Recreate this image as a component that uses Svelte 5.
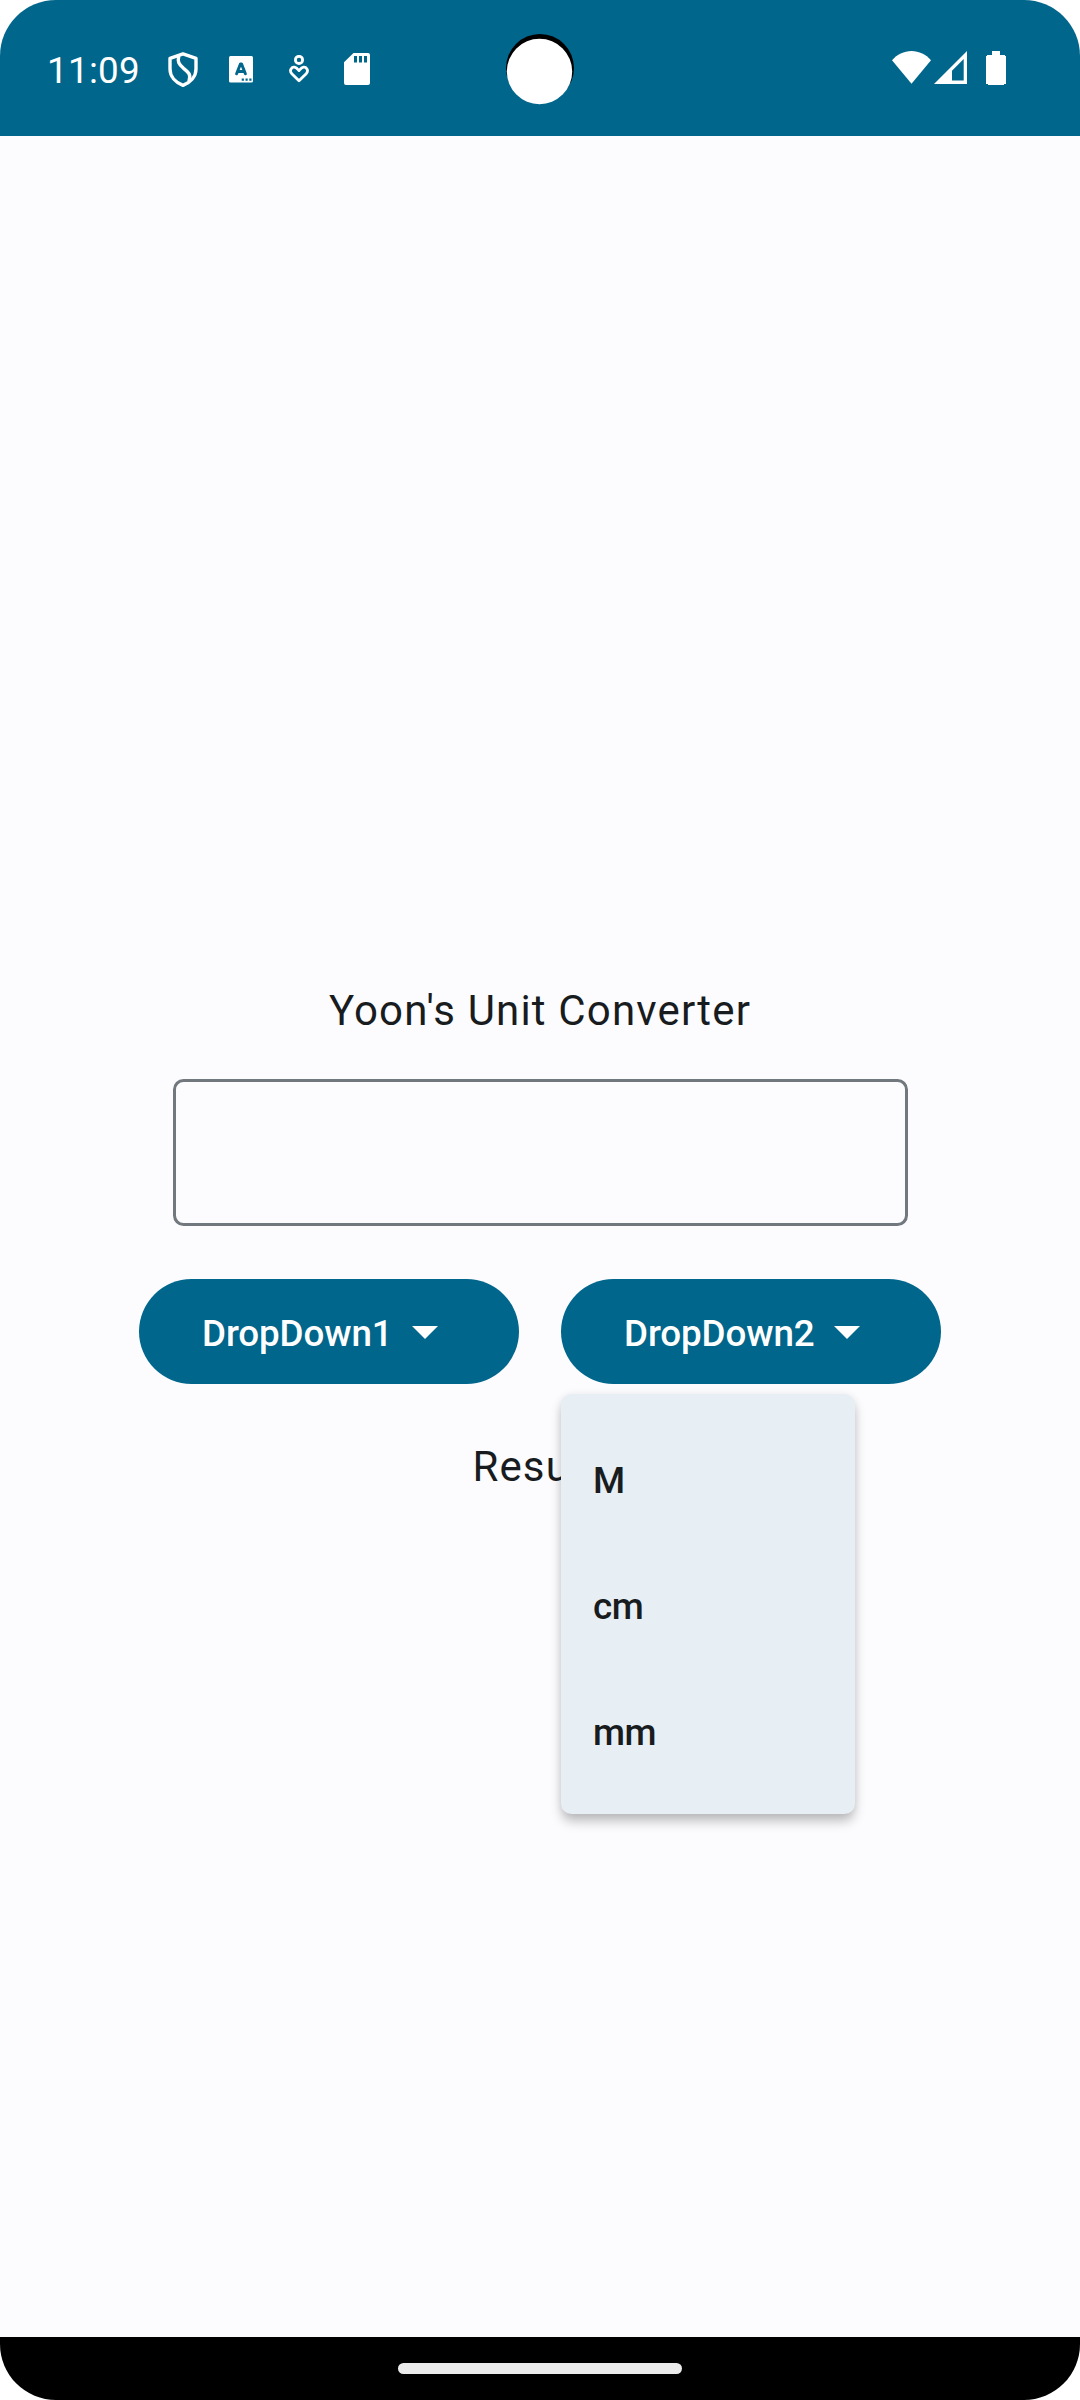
<script>
  const units = ['M', 'cm', 'mm'];
  const dropdowns = [
    { label: 'DropDown1', open: false },
    { label: 'DropDown2', open: true },
  ];
  let value = $state('');
</script>

<div class="screen">
  <header class="status">
    <span class="clock">11:09</span>
    <svg class="shield" width="30" height="36" viewBox="0 0 30 36">
      <g fill="none" stroke="#fff" stroke-width="3.4" stroke-linejoin="round">
        <path d="M15 1.900 L28 6.400 V17 C28 24.500 22.500 30.500 15 33.300 C7.500 30.500 2 24.500 2 17 V6.400 Z" />
        <path d="M10.800 4 C9.500 9.500 10.500 12 15.500 16.300 C20.500 20.300 23.500 22.500 20.900 29.500" />
      </g>
    </svg>
    <svg class="letter" width="24" height="27" viewBox="0 0 24 27">
      <rect width="24" height="26.500" rx="1.500" fill="#fff" />
      <path d="M7.600 17.800 L11.500 7.900 H12.500 L16.400 17.800 M9 15.500 H15" fill="none" stroke="#00668b" stroke-width="2.900" stroke-linecap="round" stroke-linejoin="round" />
      <path d="M12.700 22.500 h2.200 v2.200 h-2.200z M16.500 22.500 h2.200 v2.200 h-2.200z M20.300 22.500 h2.200 v2.200 h-2.200z" fill="#00668b" />
    </svg>
    <svg class="care" width="20" height="28" viewBox="0 0 20 28">
      <g fill="none" stroke="#fff" stroke-width="2.800" stroke-linejoin="round">
        <circle cx="10" cy="4.900" r="3.600" />
        <path d="M10 25.800 L2.800 18.700 C-0.300 15 3 11.800 5.500 12.200 C7.500 12.500 8.600 14 10 15.600 C11.400 14 12.500 12.500 14.500 12.200 C17 11.800 20.300 15 17.200 18.700 Z" />
      </g>
    </svg>
    <svg class="card" width="26" height="32" viewBox="0 0 26 32">
      <path fill="#fff" fill-rule="evenodd" d="M9.500 0 H24 Q26 0 26 2 V30 Q26 32 24 32 H2 Q0 32 0 30 V9.300 Z M10 3 V9.600 H13 V3 Z M15 3 V9.600 H18 V3 Z M20 3 V9.600 H23 V3 Z" />
    </svg>
    <svg class="camera" width="68" height="72" viewBox="0 0 68 72">
      <circle cx="34" cy="34" r="34" fill="#000" />
      <circle cx="33.500" cy="37.500" r="32.700" fill="#fff" />
    </svg>
    <svg class="wifi" width="39" height="33" viewBox="0 0 39 33">
      <path fill="#fff" d="M19.500 32.700 L0 9.200 C5 3.500 12 0 19.500 0 S34 3.500 39 9.200 Z" />
    </svg>
    <svg class="signal" width="33" height="33" viewBox="0 0 33 33">
      <path fill="#fff" fill-rule="evenodd" d="M0 33 L33 0 V33 Z M18 29.500 H29.700 V8 L18 19.700 Z" />
    </svg>
    <svg class="battery" width="20" height="34" viewBox="0 0 20 34">
      <path fill="#fff" d="M6 0 H14 V4 H19 V5 H20 V33 H18 V34 H2 V33 H0 V5 H1 V4 H6 Z" />
    </svg>
  </header>

  <main>
    <h1>Yoon's Unit Converter</h1>
    <input class="field" aria-label="Value" bind:value />
    <div class="row">
      {#each dropdowns as d}
        <div class="dropdown">
          <button>
            <span>{d.label}</span>
            <svg class="arrow" width="26" height="13" viewBox="0 0 26 13"><path fill="#fff" d="M0 0 H26 L13 13 Z" /></svg>
          </button>
          {#if d.open}
            <ul class="menu">
              {#each units as unit}
                <li>{unit}</li>
              {/each}
            </ul>
          {/if}
        </div>
      {/each}
    </div>
    <p class="result">Result:</p>
  </main>

  <footer><div class="pill"></div></footer>
</div>

<style>
  :global(body) {
    margin: 0;
    background: #fff;
  }
  .screen {
    display: flex;
    flex-direction: column;
    width: 1080px;
    height: 2400px;
    overflow: hidden;
    border-radius: 56px;
    background: #fcfcff;
    color: #191c1e;
    font-family: Roboto, 'Liberation Sans', sans-serif;
  }
  .status {
    display: flex;
    align-items: flex-start;
    box-sizing: border-box;
    height: 136px;
    padding-left: 47px;
    background: #00668b;
    color: #fff;
  }
  .status svg {
    flex: none;
  }
  .clock {
    width: 121px;
    margin-top: 49px;
    font-size: 36.75px;
    line-height: 43px;
    letter-spacing: 0.3px;
  }
  .shield { margin-top: 52px; }
  .letter { margin: 56px 0 0 31px; }
  .care { margin: 55px 0 0 36px; }
  .card { margin: 53px 0 0 35px; }
  .camera { margin: 34px 0 0 136px; }
  .wifi { margin: 51px 0 0 318px; }
  .signal { margin: 51px 0 0 3px; }
  .battery { margin: 51px 0 0 19px; }

  main {
    display: flex;
    flex: 1;
    flex-direction: column;
    align-items: center;
    padding-top: 843px;
  }
  h1,
  .result {
    margin: 0;
    font-size: 42px;
    font-weight: 400;
    line-height: 63px;
    letter-spacing: 1.16px;
  }
  .field {
    box-sizing: border-box;
    width: 735px;
    height: 147px;
    margin: 37px 0 53px;
    padding: 0 42px;
    border: 3px solid #71787e;
    border-radius: 10.5px;
    outline: none;
    background: transparent;
    font: inherit;
    font-size: 42px;
  }
  .row {
    display: flex;
    gap: 42px;
  }
  .dropdown {
    position: relative;
  }
  button {
    display: flex;
    align-items: center;
    box-sizing: border-box;
    width: 380px;
    height: 105px;
    padding: 3px 0 0 63px;
    border: 0;
    border-radius: 53px;
    background: #00668b;
    color: #fff;
    font-family: inherit;
    font-size: 36.75px;
    font-weight: 500;
    letter-spacing: -0.1px;
  }
  button span {
    width: 190px;
    text-align: left;
  }
  .arrow {
    margin: 0 0 2px 19.5px;
  }
  .menu {
    position: absolute;
    z-index: 1;
    top: 115px;
    left: 0;
    box-sizing: border-box;
    width: 294px;
    margin: 0;
    padding: 21px 0;
    border-radius: 10.5px;
    background: #e7eff5;
    box-shadow: 0 8px 12px -1px rgba(0, 0, 0, 0.26), 0 0 8px rgba(0, 0, 0, 0.06);
    list-style: none;
  }
  li {
    box-sizing: border-box;
    height: 126px;
    padding: 5px 32px 0;
    font-size: 36.75px;
    font-weight: 500;
    line-height: 122px;
    letter-spacing: -0.4px;
  }
  .result {
    margin-top: 51px;
  }
  footer {
    display: flex;
    justify-content: center;
    box-sizing: border-box;
    height: 63px;
    padding-top: 26px;
    background: #000;
  }
  .pill {
    width: 284px;
    height: 11px;
    border-radius: 5.5px;
    background: #ebebeb;
  }
</style>
